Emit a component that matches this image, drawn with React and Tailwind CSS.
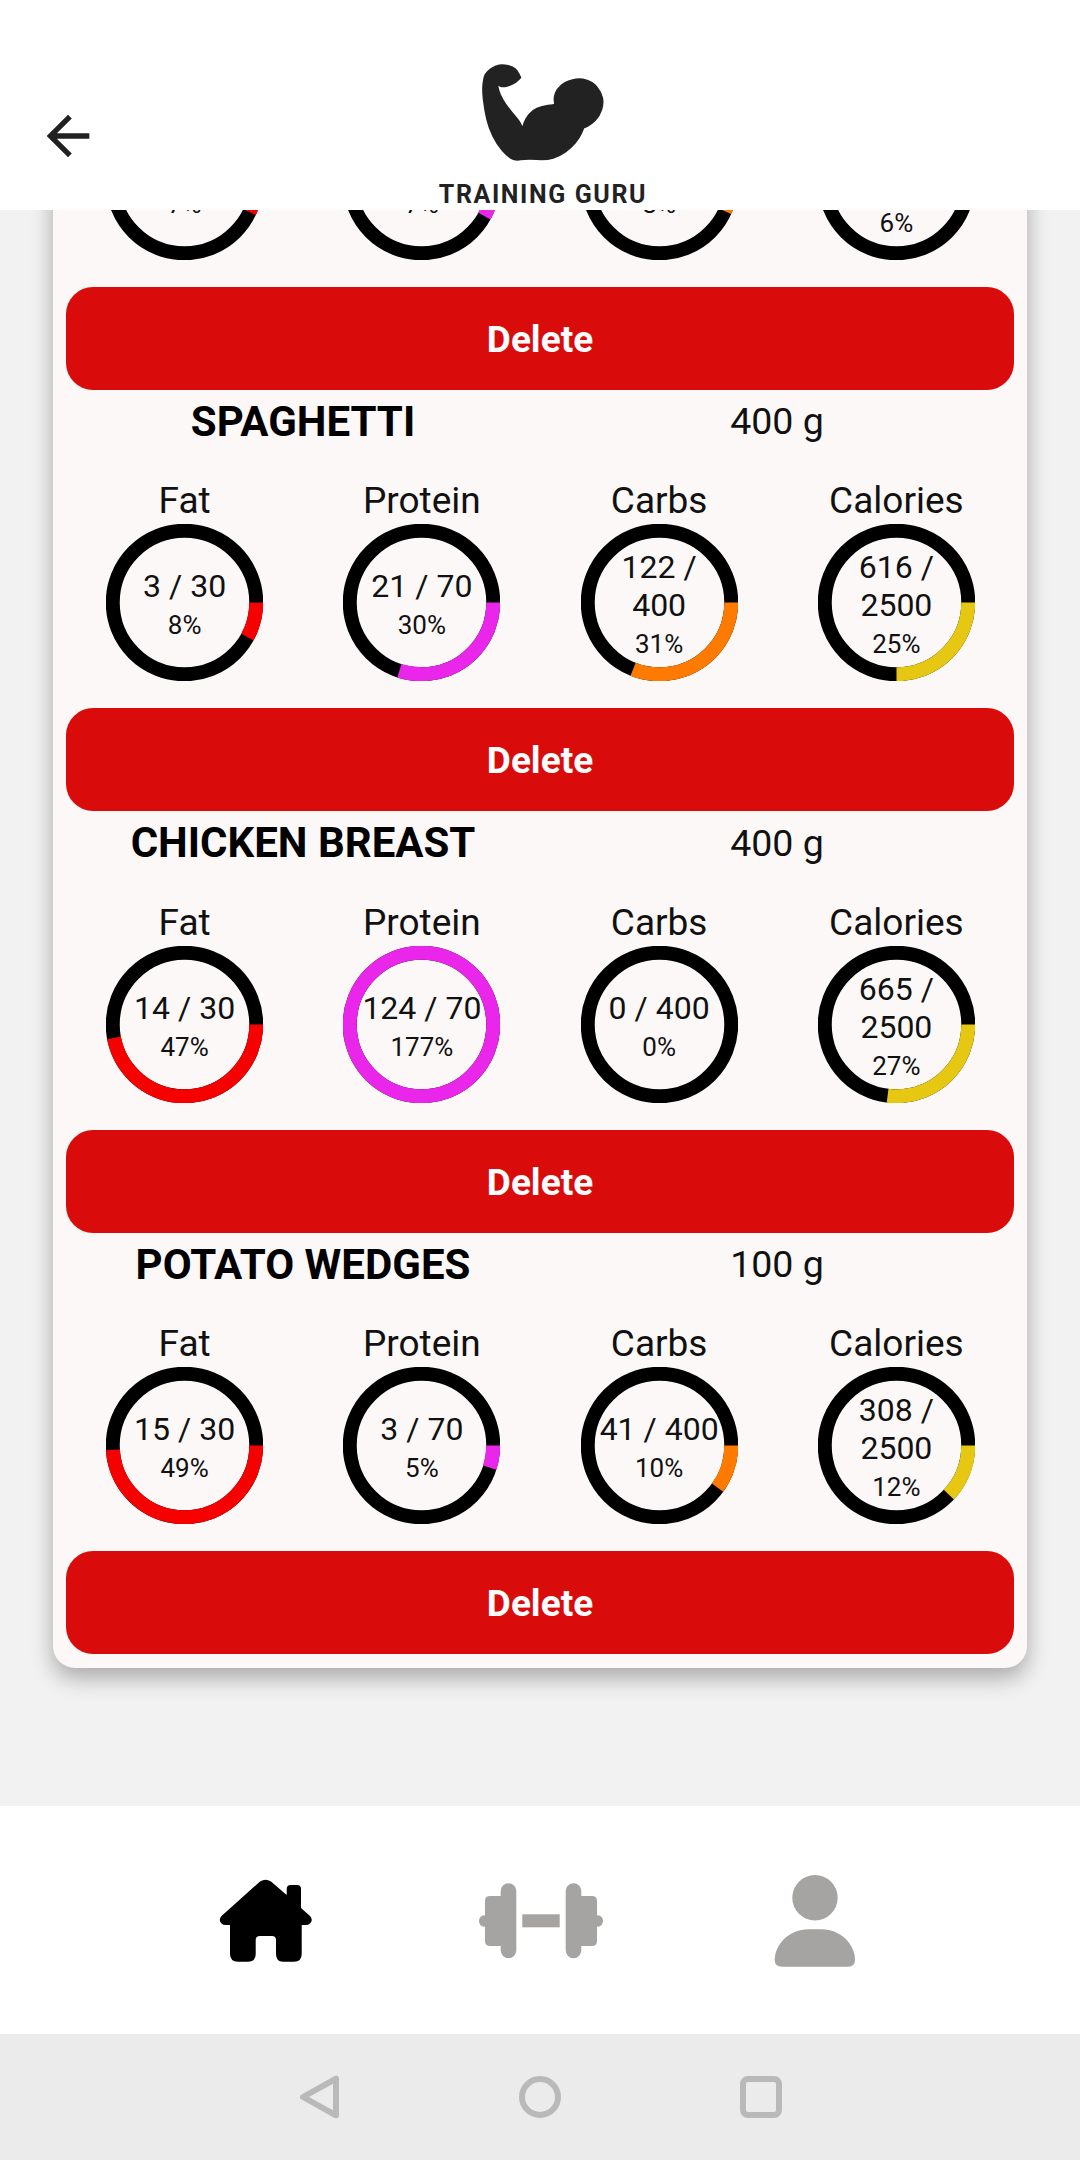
import React from "react";

const FAT = "#f60000";
const PROTEIN = "#e926e9";
const CARBS = "#ff7a00";
const CALORIES = "#e6c813";

const foods = [
  {
    name: "SPAGHETTI",
    weight: "400 g",
    fat: [3, 8],
    protein: [21, 30],
    carbs: [122, 31],
    calories: [616, 25],
  },
  {
    name: "CHICKEN BREAST",
    weight: "400 g",
    fat: [14, 47],
    protein: [124, 177],
    carbs: [0, 0],
    calories: [665, 27],
  },
  {
    name: "POTATO WEDGES",
    weight: "100 g",
    fat: [15, 49],
    protein: [3, 5],
    carbs: [41, 10],
    calories: [308, 12],
  },
];

// outline of the arm, traced from the logo (doubled points stay sharp)
const armPoints = [
  [258, 95], [285, 75], [310, 72], [340, 78], [355, 93], [364, 113], [364, 113], [350, 128], [325, 140], [305, 143],
  [295, 137], [295, 137], [300, 160], [320, 195], [345, 225], [360, 243], [367, 258], [367, 258], [375, 235],
  [395, 210], [425, 197], [462, 192], [462, 192], [460, 170], [470, 145], [495, 123], [540, 112], [580, 125],
  [605, 155], [613, 190], [600, 230], [575, 255], [553, 265], [553, 265], [540, 295], [515, 325], [480, 350],
  [440, 362], [380, 358], [345, 364], [320, 350], [290, 315], [265, 265], [252, 210], [245, 150], [250, 110],
].map(([x, y]) => [x / 3, y / 3]);

const smoothPath = (points) => {
  const mid = (a, b) => [(a[0] + b[0]) / 2, (a[1] + b[1]) / 2];
  const start = mid(points[points.length - 1], points[0]);
  let d = `M${start[0]} ${start[1]}`;
  points.forEach((p, i) => {
    const m = mid(p, points[(i + 1) % points.length]);
    d += ` Q${p[0]} ${p[1]} ${m[0]} ${m[1]}`;
  });
  return d + " Z";
};

const Ring = ({ value, max, pct, color, arc }) => (
  <div className="grid place-items-center w-[157px] h-[157px]">
    <svg viewBox="0 0 157 157" className="col-start-1 row-start-1 w-[157px] h-[157px]">
      <circle cx="78.5" cy="78.5" r="71.75" fill="none" stroke="#000" strokeWidth="14" />
      {pct > 0 && (
        <circle
          cx="78.5"
          cy="78.5"
          r="71.75"
          fill="none"
          stroke={color}
          strokeWidth="14"
          pathLength="100"
          strokeDasharray={`${Math.min(arc ?? pct, 100)} 100`}
        />
      )}
    </svg>
    <div className="col-start-1 row-start-1 w-[130px] flex flex-col items-center text-center text-[#111] pt-[1px]">
      <div className="text-[32px] leading-[38px]">
        {value} / {max}
      </div>
      <div className="text-[26px] leading-[27px] mt-[7px]">{pct}%</div>
    </div>
  </div>
);

const DeleteButton = () => (
  <button className="block w-full h-[103px] pt-[2px] rounded-[27px] bg-[#d90b0b] text-white text-[37px] font-bold">
    Delete
  </button>
);

const Nutrient = ({ label, children }) => (
  <div className="flex flex-col items-center">
    <div className="text-[37px] leading-[39px] text-[#111] mb-[4px]">{label}</div>
    {children}
  </div>
);

const FoodRow = ({ food }) => (
  <div>
    <div className="grid grid-cols-2 h-[61.4px] pb-[1px] items-center text-center text-black">
      <div className="text-[42px] font-bold">{food.name}</div>
      <div className="text-[37.5px] text-[#111]">{food.weight}</div>
    </div>
    <div className="grid grid-cols-4 -mr-[1px] mt-[30px] mb-[27px]">
      <Nutrient label="Fat">
        <Ring value={food.fat[0]} max={30} pct={food.fat[1]} color={FAT} />
      </Nutrient>
      <Nutrient label="Protein">
        <Ring value={food.protein[0]} max={70} pct={food.protein[1]} color={PROTEIN} />
      </Nutrient>
      <Nutrient label="Carbs">
        <Ring value={food.carbs[0]} max={400} pct={food.carbs[1]} color={CARBS} />
      </Nutrient>
      <Nutrient label="Calories">
        <Ring value={food.calories[0]} max={2500} pct={food.calories[1]} color={CALORIES} />
      </Nutrient>
    </div>
    <DeleteButton />
  </div>
);

const Logo = () => (
  <div className="flex flex-col items-center w-[280px]">
    <svg viewBox="0 0 280 140" className="w-[280px] h-[140px]">
      <path fill="#222" d={smoothPath(armPoints)} />
    </svg>
    <div className="pl-[6px] text-[25px] leading-[30px] font-bold tracking-[1.6px] text-[#222] whitespace-nowrap">
      TRAINING GURU
    </div>
  </div>
);

const Header = () => (
  <div className="relative z-10 h-[210px] bg-white grid grid-cols-[1fr_280px_1fr] pt-[40px] overflow-hidden">
    <svg viewBox="0 0 24 24" className="w-[64px] h-[64px] ml-[36px] mt-[64px]">
      <path fill="#212121" d="M20 11H7.83l5.59-5.59L12 4l-8 8 8 8 1.41-1.41L7.83 13H20v-2z" />
    </svg>
    <Logo />
  </div>
);

const HomeIcon = () => (
  <svg viewBox="0 0 130 120" className="w-[130px] h-[120px]">
    <path
      fill="#000"
      d="M60 21.5 Q65.7 18 71 21.5 L86.7 35 V29 Q86.7 25 90.7 25 H97 Q101 25 101 29 V48 L110 56 Q113.5 60 110 63.5 Q108.5 65 105.5 65 H101.7 V94 Q101.7 101.7 94 101.7 H83 Q76 101.7 76 94 V80 Q76 76 72 76 H60 Q55.7 76 55.7 80 V94 Q55.7 101.7 48 101.7 H38 Q30 101.7 30 94 V65 H26 Q23 65 21.5 63.5 Q18 60 21.5 56 Z"
    />
  </svg>
);

const DumbbellIcon = () => (
  <svg viewBox="0 0 150 120" className="w-[150px] h-[120px]" fill="#a5a4a2">
    <rect x="57.3" y="54.3" width="37.4" height="13" />
    <rect x="35.7" y="23.3" width="15.6" height="75" rx="7.8" />
    <path d="M36 36 H25 Q20 36 20 41 V81 Q20 86 25 86 H36 Z" />
    <rect x="14" y="55.3" width="10" height="11.4" rx="5.7" />
    <rect x="100.7" y="23.3" width="15.6" height="75" rx="7.8" />
    <path d="M116 36 H127 Q132 36 132 41 V81 Q132 86 127 86 H116 Z" />
    <rect x="128" y="55.3" width="10" height="11.4" rx="5.7" />
  </svg>
);

const UserIcon = () => (
  <svg viewBox="0 0 110 120" className="w-[110px] h-[120px]" fill="#a5a4a2">
    <circle cx="55" cy="37.7" r="22.7" />
    <path d="M14.7 100 C14.7 84 30 69.3 48 69.3 H62 C80 69.3 95 84 95 100 Q95 106.7 88 106.7 H22 Q14.7 106.7 14.7 100 Z" />
  </svg>
);

const BottomTabs = () => (
  <div className="h-[228px] bg-white flex justify-center items-center">
    <div className="w-[275px] flex justify-center"><HomeIcon /></div>
    <div className="w-[275px] flex justify-center"><DumbbellIcon /></div>
    <div className="w-[275px] flex justify-center"><UserIcon /></div>
  </div>
);

const SystemNav = () => (
  <div className="h-[126px] bg-[#ebebeb] flex justify-center items-center">
    <div className="w-[221px] flex justify-center">
      <svg viewBox="0 0 60 60" className="w-[60px] h-[60px]" fill="none" stroke="#b9b9b9" strokeWidth="6" strokeLinejoin="round">
        <path d="M14 30 L47 11.7 V48.3 Z" />
      </svg>
    </div>
    <div className="w-[221px] flex justify-center">
      <svg viewBox="0 0 60 60" className="w-[60px] h-[60px]" fill="none" stroke="#b9b9b9" strokeWidth="6">
        <circle cx="30" cy="30" r="18" />
      </svg>
    </div>
    <div className="w-[221px] flex justify-center">
      <svg viewBox="0 0 60 60" className="w-[60px] h-[60px]" fill="none" stroke="#b9b9b9" strokeWidth="6">
        <rect x="12" y="12" width="36" height="36" rx="5" />
      </svg>
    </div>
  </div>
);

export default function App() {
  return (
    <div className="w-[1080px] h-[2160px] flex flex-col bg-[#f2f2f2] font-['Roboto',sans-serif]">
      <Header />
      <div className="flex-1 overflow-hidden">
        {/* list is scrolled, first food sits under the header */}
        <div className="mx-[53px] -mt-[107px] px-[13px] pb-[14px] bg-[#fcf8f7] rounded-b-[22px] shadow-[0_10px_22px_rgba(0,0,0,0.3)]">
          <div className="grid grid-cols-4 -mr-[1px] mb-[27px]">
            <div className="flex justify-center"><Ring value={2} max={30} pct={7} color={FAT} /></div>
            <div className="flex justify-center"><Ring value={5} max={70} pct={7} arc={8} color={PROTEIN} /></div>
            <div className="flex justify-center"><Ring value={32} max={400} pct={8} arc={6.8} color={CARBS} /></div>
            <div className="flex justify-center"><Ring value={150} max={2500} pct={6} color={CALORIES} /></div>
          </div>
          <DeleteButton />
          {foods.map((food) => (
            <FoodRow key={food.name} food={food} />
          ))}
        </div>
      </div>
      <BottomTabs />
      <SystemNav />
    </div>
  );
}
